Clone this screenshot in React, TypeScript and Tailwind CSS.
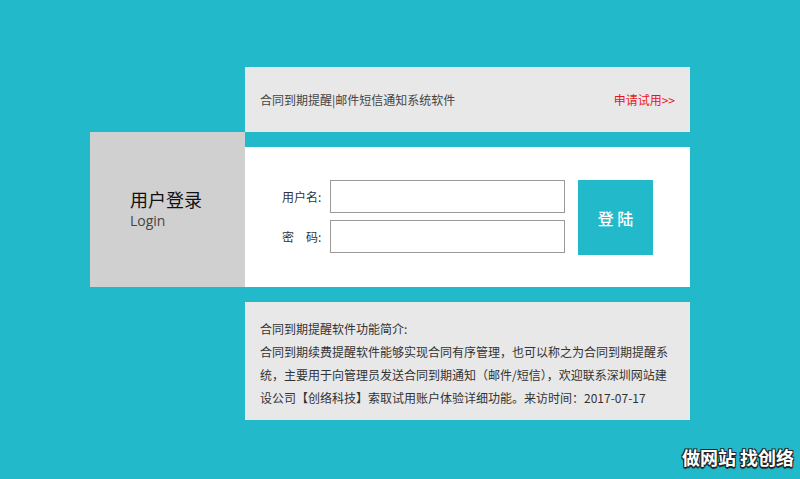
export default function App() {
  return (
    <div className="relative w-full h-[479px] overflow-hidden bg-[#22bacb] pt-[67px] pl-[90px] font-['Noto_Sans_CJK_SC',sans-serif]">
      {/* top title bar */}
      <div className="ml-[155px] w-[445px] h-[65px] bg-[#e8e8e8] flex items-center justify-between px-[15px] text-[12px]">
        <span className="text-[#444]">合同到期提醒|邮件短信通知系统软件</span>
        <span className="text-[#e8141b]">申请试用&gt;&gt;</span>
      </div>

      <div className="flex h-[155px]">
        <div className="w-[155px] bg-[#d0d0d0] flex flex-col justify-center pl-[40px] pb-[2px]">
          <div className="text-[18px] leading-[24px] text-[#111]">用户登录</div>
          <div className="text-[14px] leading-[20px] text-[#444] font-['Open_Sans',sans-serif]">Login</div>
        </div>
        <div className="w-[445px] pt-[15px]">
          <div className="h-[140px] bg-white flex items-start pt-[33px] pl-[37px]">
            <div className="flex flex-col gap-[7px]">
              <div className="flex items-center">
                <span className="w-[48px] text-[12px] text-[#333]">用户名:</span>
                <input className="w-[235px] h-[33px] border border-[#999] outline-none" />
              </div>
              <div className="flex items-center">
                <span className="w-[48px] text-[12px] text-[#333]">密　码:</span>
                <input type="password" className="w-[235px] h-[33px] border border-[#999] outline-none" />
              </div>
            </div>
            <button className="ml-[13px] w-[75px] h-[75px] bg-[#22bacb] text-white text-[16px] font-medium">
              登 陆
            </button>
          </div>
        </div>
      </div>

      {/* intro */}
      <div className="ml-[155px] mt-[15px] w-[445px] h-[118px] bg-[#e8e8e8] px-[15px] pt-[15px] text-[12px] leading-[23px] text-[#333]">
        <p>合同到期提醒软件功能简介:</p>
        <p>
          合同到期续费提醒软件能够实现合同有序管理，也可以称之为合同到期提醒系统，主要用于向管理员发送合同到期通知（邮件/短信），欢迎联系深圳网站建设公司【创络科技】索取试用账户体验详细功能。来访时间：2017-07-17
        </p>
      </div>

      <div className="absolute right-[6px] bottom-[8px] text-[18px] font-bold text-white [text-shadow:-1px_-1px_0_#222,1px_-1px_0_#222,-1px_1px_0_#222,1px_1px_0_#222,0_2px_1px_#222]">
        做网站 找创络
      </div>
    </div>
  );
}
